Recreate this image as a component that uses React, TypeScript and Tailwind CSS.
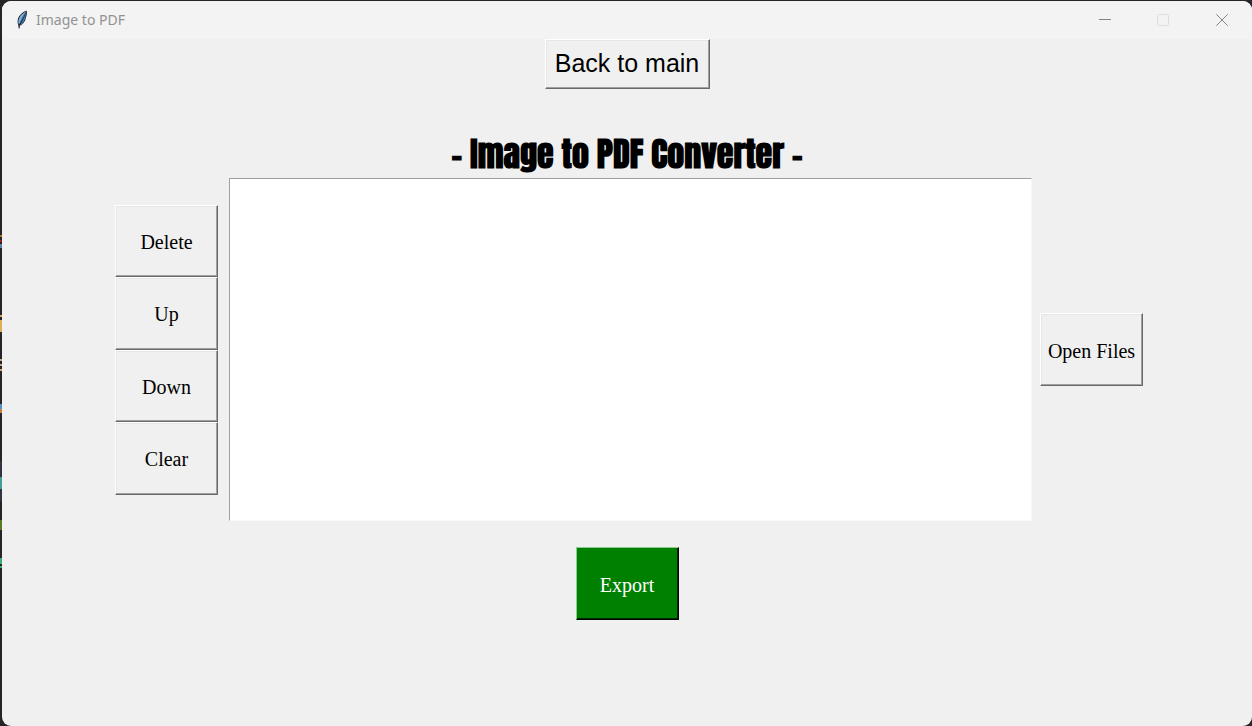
import { useState, type ButtonHTMLAttributes } from 'react';
import { clsx } from 'clsx';

type ToolButtonProps = ButtonHTMLAttributes<HTMLButtonElement> & { accent?: boolean };

function ToolButton({ accent = false, className, ...rest }: ToolButtonProps) {
  return (
    <button
      type="button"
      className={clsx(
        'flex items-center justify-center whitespace-nowrap border',
        accent
          ? 'border-t-[#8fc98f] border-l-[#8fc98f] border-r-black border-b-black bg-[#008000] text-white shadow-[inset_-1px_-1px_0_#002800]'
          : 'border-t-white border-l-white border-r-[#696969] border-b-[#696969] bg-[#f0f0f0] text-black shadow-[inset_-1px_-1px_0_#a0a0a0,inset_1px_1px_0_#e6e6e6]',
        className,
      )}
      {...rest}
    />
  );
}

function FeatherIcon() {
  return (
    <svg viewBox="0 0 12 20" className="h-5 w-3" aria-hidden="true">
      <path d="M10.500 .5C6.500 2 2.500 5.500 1.700 10c-.3 2 0 3.800 .6 5.300L3 19.500l1-3.700c3.200-1.500 5.200-4.300 5.900-7.700C10.600 5 11.500 3 10.500 .5Z" fill="#202225" />
      <path d="M10 1.500C6 3.500 3 6.500 2.300 11c-.1 1.400 0 2.600 .7 3.600C5 11.500 7.700 7 10 1.500Z" fill="#79aee0" />
      <path d="M10.100 2.500C8.300 7.600 6.300 11.500 4 15 7.800 12.800 9.200 9.500 9.600 6.500Z" fill="#3f7fc0" />
      <path d="M9 3.500C6.500 7.500 4 11.500 3 18" fill="none" stroke="#24405e" strokeWidth=".6" />
    </svg>
  );
}

const backdropMarks = [
  'top-[235px] h-[2px] bg-[#a17822]',
  'top-[240px] h-[2px] bg-[#982018]',
  'top-[244px] h-[4px] bg-[#5c7fa8]',
  'top-[315px] h-[2px] bg-[#d0a860]',
  'top-[320px] h-[12px] bg-[#dfae58]',
  'top-[359px] h-[2px] bg-[#c5a47c]',
  'top-[364px] h-[2px] bg-[#c5a47c]',
  'top-[369px] h-[2px] bg-[#c5a47c]',
  'top-[404px] h-[5px] bg-[#5590c0]',
  'top-[409px] h-[4px] bg-[#c98232]',
  'top-[461px] h-[40px] bg-[#34343e]',
  'top-[477px] h-[12px] bg-[#459c94]',
  'top-[520px] h-[10px] bg-[#567b20]',
  'top-[558px] h-[6px] bg-[#3cae78]',
  'top-[566px] h-[2px] bg-[#3cae78]',
];

export default function App() {
  const [files, setFiles] = useState<string[]>([]);
  const serif = 'w-[103px] pt-[2px] font-["Liberation_Serif",serif] text-[20px]';

  return (
    <div className="relative flex min-h-screen flex-col bg-[#262427] pt-px pl-[2px]">
      {backdropMarks.map((mark) => (
        <span key={mark} aria-hidden="true" className={clsx('absolute left-0 w-[2px]', mark)} />
      ))}
      <div className="relative flex flex-1 flex-col overflow-hidden rounded-[9px] bg-[#f0f0f0]">
        <header className="flex h-[38px] items-center justify-between bg-[#f3f3f3]">
          <div className="flex items-center gap-2 pl-[14px]">
            <FeatherIcon />
            <span className='pb-[2px] font-["Noto_Sans","Open_Sans",sans-serif] text-[14px] text-[#929292]'>Image to PDF</span>
          </div>
          <div className="flex h-full text-[#868686]">
            <button type="button" aria-label="Minimize" className="flex w-[58px] items-center justify-center">
              <svg viewBox="0 0 12 12" className="size-3" stroke="currentColor" aria-hidden="true"><path d="M0 5.500H12" /></svg>
            </button>
            <button type="button" aria-label="Maximize" disabled className="flex w-[58px] items-center justify-center text-[#dedede]">
              <svg viewBox="0 0 12 12" className="size-3" fill="none" stroke="currentColor" aria-hidden="true"><rect x=".5" y=".5" width="11" height="11" rx="1" /></svg>
            </button>
            <button type="button" aria-label="Close" className="flex w-[60px] items-center justify-center">
              <svg viewBox="0 0 12 12" className="size-3" stroke="currentColor" aria-hidden="true"><path d="M.3 .3 11.700 11.700M11.700 .3 .3 11.700" /></svg>
            </button>
          </div>
        </header>

        <main className="flex flex-col items-center">
          <ToolButton className='h-[50px] w-[165px] font-["Liberation_Sans",sans-serif] text-[25px]'>Back to main</ToolButton>
          <h1 className='mt-[43px] h-[46px] whitespace-nowrap font-["Impact","Anton","Roboto_Condensed",sans-serif] text-[34px] leading-[44px] font-bold text-black'>
            - Image to PDF Converter -
          </h1>
          <div className="flex w-full items-center justify-center pl-[4px]">
            <div className="flex h-[290px] flex-col">
              <ToolButton className={clsx(serif, 'flex-1')}>Delete</ToolButton>
              <ToolButton className={clsx(serif, 'flex-1')}>Up</ToolButton>
              <ToolButton className={clsx(serif, 'flex-1')}>Down</ToolButton>
              <ToolButton className={clsx(serif, 'flex-1')} onClick={() => setFiles([])}>Clear</ToolButton>
            </div>
            <ul aria-label="Selected images" className="mr-2 ml-[11px] h-[343px] max-w-[803px] flex-1 border border-t-[#a0a0a0] border-r-[#f8f8f8] border-b-[#f8f8f8] border-l-[#a0a0a0] bg-white">
              {files.map((file) => <li key={file}>{file}</li>)}
            </ul>
            <ToolButton className={clsx(serif, 'h-[73px]')}>Open Files</ToolButton>
          </div>
          <ToolButton accent className={clsx(serif, 'mt-[26px] h-[73px]')}>Export</ToolButton>
        </main>
      </div>
    </div>
  );
}
